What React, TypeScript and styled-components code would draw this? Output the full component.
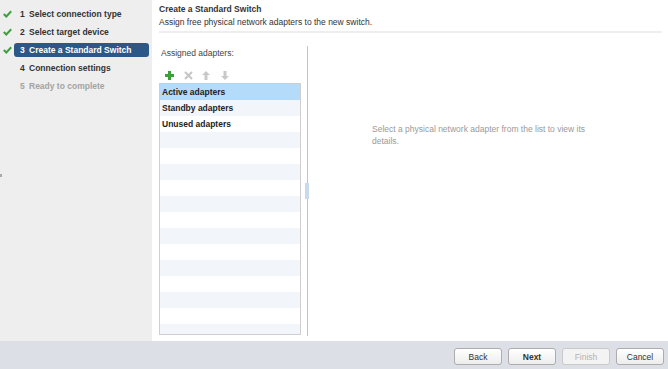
import React from 'react';
import styled, { createGlobalStyle } from 'styled-components';

const GlobalStyle = createGlobalStyle`
  html, body {
    margin: 0;
    padding: 0;
    background: #fff;
  }
  body {
    font-family: "Liberation Sans", Arial, sans-serif;
    font-size: 8.5px;
    color: #333;
  }
`;

const Wizard = styled.div`
  width: 668px;
  height: 369px;
  display: flex;
  flex-direction: column;
  overflow: hidden;
`;

const Body = styled.div`
  flex: 1;
  display: flex;
  min-height: 0;
`;

const Sidebar = styled.nav`
  position: relative;
  width: 152px;
  flex: none;
  background: #eeeeee;
  padding-top: 5px;
  box-sizing: border-box;
`;

const Grip = styled.span`
  position: absolute;
  left: 0;
  top: 174px;
  width: 2px;
  height: 3px;
  background: #a8a8a8;
`;

const StepRow = styled.div`
  display: flex;
  align-items: center;
  height: 18px;
`;

const CheckSlot = styled.span`
  width: 14px;
  flex: none;
  padding-left: 3px;
  box-sizing: border-box;
  display: flex;
  align-items: center;
`;

const StepLabel = styled.div<{ $active?: boolean; $disabled?: boolean }>`
  width: 135px;
  height: 14px;
  box-sizing: border-box;
  padding-left: 6px;
  display: flex;
  align-items: center;
  border-radius: 3px;
  font-weight: bold;
  white-space: nowrap;
  background: ${(p) => (p.$active ? '#2d5786' : 'transparent')};
  color: ${(p) => (p.$active ? '#fff' : p.$disabled ? '#a3a3a3' : '#333')};
`;

const StepNum = styled.span`
  width: 9px;
  flex: none;
`;

const Main = styled.main`
  flex: 1;
  min-width: 0;
  display: flex;
  flex-direction: column;
  padding: 3px 6px 5px 7px;
  box-sizing: border-box;
`;

const Title = styled.div`
  font-weight: bold;
  line-height: 13px;
  color: #333;
`;

const Subtitle = styled.div`
  line-height: 13px;
  color: #333;
`;

const Divider = styled.div`
  height: 2px;
  margin-top: 2px;
  background: #eeeeee;
`;

const Content = styled.div`
  flex: 1;
  min-height: 0;
  display: flex;
  margin-top: 13px;
`;

const AdapterColumn = styled.div`
  width: 142px;
  flex: none;
  display: flex;
  flex-direction: column;
  padding-bottom: 1px;
  box-sizing: border-box;
`;

const FieldLabel = styled.div`
  line-height: 13px;
  padding: 1px 0 0 2px;
  margin-bottom: 7px;
  color: #444;
`;

const Toolbar = styled.div`
  height: 16px;
  display: flex;
  align-items: center;
  gap: 8.5px;
  padding-left: 6px;
`;

const ToolButton = styled.span`
  width: 10px;
  height: 10px;
  display: flex;
  align-items: center;
`;

const AdapterList = styled.div`
  flex: 1;
  border: 1px solid #cfcfcf;
  overflow: hidden;
`;

const AdapterRow = styled.div<{ $selected?: boolean; $striped?: boolean }>`
  height: 16px;
  box-sizing: border-box;
  padding: 1px 0 0 2px;
  line-height: 15px;
  font-weight: bold;
  color: #222;
  background: ${(p) => (p.$selected ? '#b5dbfa' : p.$striped ? '#f2f5fa' : '#fff')};
`;

const Splitter = styled.div`
  position: relative;
  width: 1px;
  flex: none;
  margin-left: 6px;
  background: #bcc6d2;
`;

const SplitterHandle = styled.span`
  position: absolute;
  left: -2px;
  top: 137px;
  width: 4px;
  height: 16px;
  background: #c9daec;
`;

const DetailPane = styled.div`
  flex: 1;
  padding: 77px 0 0 64px;
  color: #9a9a9a;
  line-height: 12px;
`;

const DetailText = styled.div`
  max-width: 225px;
`;

const Footer = styled.footer`
  height: 28px;
  flex: none;
  background: #dcdfe6;
  display: flex;
  justify-content: flex-end;
  align-items: flex-start;
  gap: 6px;
  padding: 7px 4px 0 0;
  box-sizing: border-box;
`;

const Button = styled.button<{ $primary?: boolean }>`
  width: 48px;
  height: 17px;
  padding: 0;
  border: 1px solid #adadad;
  border-radius: 3px;
  background: linear-gradient(#ffffff, #ededed);
  font-family: inherit;
  font-size: 8.5px;
  font-weight: ${(p) => (p.$primary ? 'bold' : 'normal')};
  color: #333;

  &:disabled {
    color: #b3b3b3;
    border-color: #c9c9c9;
    background: #f3f3f3;
  }
`;

const Check = () => (
  <svg width="9" height="8" viewBox="0 0 9 8">
    <path d="M0.8 4 L3.3 6.5 L8.2 1.2" fill="none" stroke="#3f9f3f" strokeWidth="2" />
  </svg>
);

const PlusIcon = () => (
  <svg width="9" height="9" viewBox="0 0 9 9">
    <rect x="3" y="0" width="3" height="9" fill="#38a238" />
    <rect x="0" y="3" width="9" height="3" fill="#38a238" />
  </svg>
);

const RemoveIcon = () => (
  <svg width="9" height="9" viewBox="0 0 9 9">
    <path d="M1 1 L8 8 M8 1 L1 8" stroke="#c6c6c6" strokeWidth="2" />
  </svg>
);

const ArrowIcon = ({ down }: { down?: boolean }) => (
  <svg width="8" height="9" viewBox="0 0 8 9" style={down ? { transform: 'rotate(180deg)' } : undefined}>
    <polygon points="4,0 8,4 5.5,4 5.5,9 2.5,9 2.5,4 0,4" fill="#c9c9c9" />
  </svg>
);

const steps = [
  { label: 'Select connection type', done: true },
  { label: 'Select target device', done: true },
  { label: 'Create a Standard Switch', done: true, active: true },
  { label: 'Connection settings' },
  { label: 'Ready to complete', disabled: true },
];

const adapterGroups = ['Active adapters', 'Standby adapters', 'Unused adapters'];
const ROW_COUNT = 16;

export default function App() {
  const rows = Array.from({ length: ROW_COUNT }, (_, i) => adapterGroups[i] ?? '');

  return (
    <>
      <GlobalStyle />
      <Wizard>
        <Body>
          <Sidebar>
            {steps.map((step, i) => (
              <StepRow key={step.label}>
                <CheckSlot>{step.done && <Check />}</CheckSlot>
                <StepLabel $active={step.active} $disabled={step.disabled}>
                  <StepNum>{i + 1}</StepNum>
                  {step.label}
                </StepLabel>
              </StepRow>
            ))}
            <Grip />
          </Sidebar>
          <Main>
            <Title>Create a Standard Switch</Title>
            <Subtitle>Assign free physical network adapters to the new switch.</Subtitle>
            <Divider />
            <Content>
              <AdapterColumn>
                <FieldLabel>Assigned adapters:</FieldLabel>
                <Toolbar>
                  <ToolButton><PlusIcon /></ToolButton>
                  <ToolButton><RemoveIcon /></ToolButton>
                  <ToolButton><ArrowIcon /></ToolButton>
                  <ToolButton><ArrowIcon down /></ToolButton>
                </Toolbar>
                <AdapterList>
                  {rows.map((name, i) => (
                    <AdapterRow key={i} $selected={i === 0} $striped={i % 2 === 1}>
                      {name}
                    </AdapterRow>
                  ))}
                </AdapterList>
              </AdapterColumn>
              <Splitter>
                <SplitterHandle />
              </Splitter>
              <DetailPane>
                <DetailText>
                  Select a physical network adapter from the list to view its details.
                </DetailText>
              </DetailPane>
            </Content>
          </Main>
        </Body>
        <Footer>
          <Button>Back</Button>
          <Button $primary>Next</Button>
          <Button disabled>Finish</Button>
          <Button>Cancel</Button>
        </Footer>
      </Wizard>
    </>
  );
}
